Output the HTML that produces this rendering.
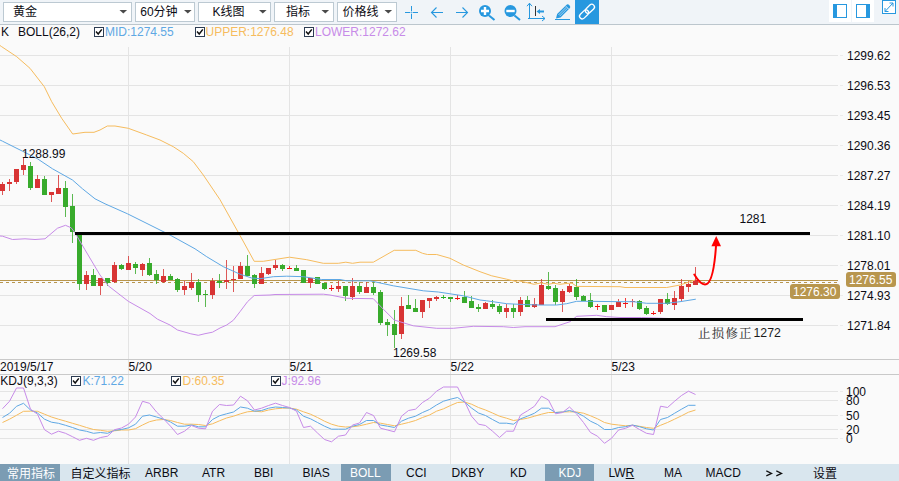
<!DOCTYPE html>
<html><head><meta charset="utf-8"><title>chart</title>
<style>
html,body{margin:0;padding:0;}
body{width:899px;height:481px;overflow:hidden;background:#fafafa;position:relative;font-family:"Liberation Sans",sans-serif;}
#tb{position:absolute;left:0;top:0;width:899px;height:24px;background:#f0f4f8;border-bottom:1px solid #bcc6cd;}
.dd{position:absolute;top:2px;height:18px;background:#fff;border:1px solid #bcc9d2;}
#tabs{position:absolute;left:0;top:464px;width:899px;height:17px;background:#d9e6ee;}
.sel{position:absolute;top:464px;height:17px;background:#7b9cb3;}
.t{position:absolute;white-space:nowrap;line-height:14px;font-size:12px;}
svg{position:absolute;left:0;top:0;}
</style></head><body>
<div id="tb"></div>
<div class="dd" style="left:3px;width:127px"></div>
<div class="dd" style="left:135px;width:58px"></div>
<div class="dd" style="left:198px;width:71px"></div>
<div class="dd" style="left:274px;width:58px"></div>
<div class="dd" style="left:337px;width:58px"></div>
<div id="tabs"></div>
<div class="sel" style="left:0;width:60px"></div>
<div class="sel" style="left:341px;width:50px"></div>
<div class="sel" style="left:545px;width:49px"></div>
<svg width="899" height="481" viewBox="0 0 899 481">
<rect x="0" y="55" width="838" height="1" fill="#e4e4e4"/>
<rect x="840" y="55" width="3" height="1" fill="#ececec"/>
<rect x="0" y="85" width="838" height="1" fill="#e4e4e4"/>
<rect x="840" y="85" width="3" height="1" fill="#ececec"/>
<rect x="0" y="115" width="838" height="1" fill="#e4e4e4"/>
<rect x="840" y="115" width="3" height="1" fill="#ececec"/>
<rect x="0" y="145" width="838" height="1" fill="#e4e4e4"/>
<rect x="840" y="145" width="3" height="1" fill="#ececec"/>
<rect x="0" y="175" width="838" height="1" fill="#e4e4e4"/>
<rect x="840" y="175" width="3" height="1" fill="#ececec"/>
<rect x="0" y="205" width="838" height="1" fill="#e4e4e4"/>
<rect x="840" y="205" width="3" height="1" fill="#ececec"/>
<rect x="0" y="235" width="838" height="1" fill="#e4e4e4"/>
<rect x="840" y="235" width="3" height="1" fill="#ececec"/>
<rect x="0" y="265" width="838" height="1" fill="#e4e4e4"/>
<rect x="840" y="265" width="3" height="1" fill="#ececec"/>
<rect x="0" y="295" width="838" height="1" fill="#e4e4e4"/>
<rect x="840" y="295" width="3" height="1" fill="#ececec"/>
<rect x="0" y="325" width="838" height="1" fill="#e4e4e4"/>
<rect x="840" y="325" width="3" height="1" fill="#ececec"/>
<rect x="128" y="47" width="1" height="417" fill="#e4e4e4"/>
<rect x="289" y="47" width="1" height="417" fill="#e4e4e4"/>
<rect x="450" y="47" width="1" height="417" fill="#e4e4e4"/>
<rect x="611" y="47" width="1" height="417" fill="#e4e4e4"/>
<rect x="0" y="391" width="838" height="1" fill="#e4e4e4"/>
<rect x="840" y="391" width="3" height="1" fill="#ececec"/>
<rect x="0" y="400" width="838" height="1" fill="#e4e4e4"/>
<rect x="840" y="400" width="3" height="1" fill="#ececec"/>
<rect x="0" y="415" width="838" height="1" fill="#e4e4e4"/>
<rect x="840" y="415" width="3" height="1" fill="#ececec"/>
<rect x="0" y="429" width="838" height="1" fill="#e4e4e4"/>
<rect x="840" y="429" width="3" height="1" fill="#ececec"/>
<rect x="0" y="438" width="838" height="1" fill="#e4e4e4"/>
<rect x="840" y="438" width="3" height="1" fill="#ececec"/>
<rect x="0" y="359" width="899" height="1" fill="#c9c9c9"/>
<rect x="0" y="374" width="899" height="1" fill="#c9c9c9"/>
<rect x="0" y="280" width="838" height="1" fill="#b8964e"/>
<line x1="0" y1="282.5" x2="838" y2="282.5" stroke="#b8964e" stroke-width="1" stroke-dasharray="3,3" shape-rendering="crispEdges"/>
<g shape-rendering="crispEdges"><rect x="2" y="182" width="1" height="13" fill="#d83434" opacity="0.82"/><rect x="0" y="184" width="5" height="7" fill="#d83434"/><rect x="9" y="179" width="1" height="12" fill="#d83434" opacity="0.82"/><rect x="7" y="182" width="5" height="2" fill="#d83434"/><rect x="16" y="169" width="1" height="15" fill="#d83434" opacity="0.82"/><rect x="14" y="169" width="5" height="13" fill="#d83434"/><rect x="23" y="158" width="1" height="17" fill="#d83434" opacity="0.82"/><rect x="21" y="165" width="5" height="5" fill="#d83434"/><rect x="30" y="162" width="1" height="28" fill="#38ab2c" opacity="0.82"/><rect x="28" y="166" width="5" height="22" fill="#38ab2c"/><rect x="37" y="175" width="1" height="13" fill="#d83434" opacity="0.82"/><rect x="35" y="179" width="5" height="9" fill="#d83434"/><rect x="44" y="176" width="1" height="19" fill="#38ab2c" opacity="0.82"/><rect x="42" y="179" width="5" height="16" fill="#38ab2c"/><rect x="51" y="192" width="1" height="10" fill="#d83434" opacity="0.82"/><rect x="49" y="192" width="5" height="3" fill="#d83434"/><rect x="58" y="175" width="1" height="19" fill="#d83434" opacity="0.82"/><rect x="56" y="188" width="5" height="6" fill="#d83434"/><rect x="65" y="181" width="1" height="36" fill="#38ab2c" opacity="0.82"/><rect x="63" y="188" width="5" height="19" fill="#38ab2c"/><rect x="72" y="194" width="1" height="49" fill="#38ab2c" opacity="0.82"/><rect x="70" y="206" width="5" height="26" fill="#38ab2c"/><rect x="79" y="232" width="1" height="58" fill="#38ab2c" opacity="0.82"/><rect x="77" y="232" width="5" height="52" fill="#38ab2c"/><rect x="86" y="271" width="1" height="19" fill="#d83434" opacity="0.82"/><rect x="84" y="275" width="5" height="9" fill="#d83434"/><rect x="93" y="269" width="1" height="17" fill="#38ab2c" opacity="0.82"/><rect x="91" y="275" width="5" height="11" fill="#38ab2c"/><rect x="100" y="278" width="1" height="17" fill="#d83434" opacity="0.82"/><rect x="98" y="278" width="5" height="8" fill="#d83434"/><rect x="107" y="278" width="1" height="8" fill="#38ab2c" opacity="0.82"/><rect x="105" y="278" width="5" height="5" fill="#38ab2c"/><rect x="114" y="262" width="1" height="21" fill="#d83434" opacity="0.82"/><rect x="112" y="265" width="5" height="17" fill="#d83434"/><rect x="121" y="264" width="1" height="6" fill="#38ab2c" opacity="0.82"/><rect x="119" y="265" width="5" height="4" fill="#38ab2c"/><rect x="128" y="256" width="1" height="14" fill="#d83434" opacity="0.82"/><rect x="126" y="263" width="5" height="7" fill="#d83434"/><rect x="135" y="262" width="1" height="12" fill="#38ab2c" opacity="0.82"/><rect x="133" y="264" width="5" height="4" fill="#38ab2c"/><rect x="142" y="263" width="1" height="13" fill="#d83434" opacity="0.82"/><rect x="140" y="264" width="5" height="6" fill="#d83434"/><rect x="149" y="258" width="1" height="18" fill="#38ab2c" opacity="0.82"/><rect x="147" y="263" width="5" height="12" fill="#38ab2c"/><rect x="156" y="270" width="1" height="14" fill="#38ab2c" opacity="0.82"/><rect x="154" y="274" width="5" height="6" fill="#38ab2c"/><rect x="163" y="269" width="1" height="14" fill="#d83434" opacity="0.82"/><rect x="161" y="276" width="5" height="6" fill="#d83434"/><rect x="170" y="274" width="1" height="6" fill="#38ab2c" opacity="0.82"/><rect x="168" y="276" width="5" height="4" fill="#38ab2c"/><rect x="177" y="278" width="1" height="14" fill="#38ab2c" opacity="0.82"/><rect x="175" y="279" width="5" height="11" fill="#38ab2c"/><rect x="184" y="281" width="1" height="14" fill="#d83434" opacity="0.82"/><rect x="182" y="286" width="5" height="4" fill="#d83434"/><rect x="191" y="273" width="1" height="17" fill="#d83434" opacity="0.82"/><rect x="189" y="282" width="5" height="6" fill="#d83434"/><rect x="198" y="279" width="1" height="23" fill="#38ab2c" opacity="0.82"/><rect x="196" y="282" width="5" height="13" fill="#38ab2c"/><rect x="205" y="290" width="1" height="17" fill="#38ab2c" opacity="0.82"/><rect x="203" y="294" width="5" height="1" fill="#38ab2c"/><rect x="212" y="278" width="1" height="21" fill="#d83434" opacity="0.82"/><rect x="210" y="281" width="5" height="14" fill="#d83434"/><rect x="219" y="274" width="1" height="14" fill="#38ab2c" opacity="0.82"/><rect x="217" y="281" width="5" height="2" fill="#38ab2c"/><rect x="226" y="260" width="1" height="29" fill="#d83434" opacity="0.82"/><rect x="224" y="280" width="5" height="2" fill="#d83434"/><rect x="233" y="266" width="1" height="26" fill="#d83434" opacity="0.82"/><rect x="231" y="279" width="5" height="1" fill="#d83434"/><rect x="240" y="262" width="1" height="17" fill="#d83434" opacity="0.82"/><rect x="238" y="266" width="5" height="13" fill="#d83434"/><rect x="247" y="255" width="1" height="21" fill="#38ab2c" opacity="0.82"/><rect x="245" y="266" width="5" height="10" fill="#38ab2c"/><rect x="254" y="274" width="1" height="14" fill="#38ab2c" opacity="0.82"/><rect x="252" y="275" width="5" height="9" fill="#38ab2c"/><rect x="261" y="267" width="1" height="17" fill="#d83434" opacity="0.82"/><rect x="259" y="273" width="5" height="11" fill="#d83434"/><rect x="268" y="268" width="1" height="7" fill="#d83434" opacity="0.82"/><rect x="266" y="268" width="5" height="6" fill="#d83434"/><rect x="275" y="260" width="1" height="10" fill="#d83434" opacity="0.82"/><rect x="273" y="265" width="5" height="3" fill="#d83434"/><rect x="282" y="264" width="1" height="7" fill="#38ab2c" opacity="0.82"/><rect x="280" y="265" width="5" height="4" fill="#38ab2c"/><rect x="289" y="266" width="1" height="3" fill="#f01010" opacity="0.82"/><rect x="287" y="268" width="5" height="1" fill="#f01010"/><rect x="296" y="265" width="1" height="6" fill="#38ab2c" opacity="0.82"/><rect x="294" y="268" width="5" height="3" fill="#38ab2c"/><rect x="303" y="270" width="1" height="13" fill="#38ab2c" opacity="0.82"/><rect x="301" y="270" width="5" height="13" fill="#38ab2c"/><rect x="310" y="278" width="1" height="10" fill="#d83434" opacity="0.82"/><rect x="308" y="278" width="5" height="5" fill="#d83434"/><rect x="317" y="277" width="1" height="7" fill="#38ab2c" opacity="0.82"/><rect x="315" y="277" width="5" height="7" fill="#38ab2c"/><rect x="324" y="283" width="1" height="7" fill="#38ab2c" opacity="0.82"/><rect x="322" y="283" width="5" height="6" fill="#38ab2c"/><rect x="331" y="285" width="1" height="6" fill="#f01010" opacity="0.82"/><rect x="329" y="288" width="5" height="1" fill="#f01010"/><rect x="338" y="281" width="1" height="11" fill="#d83434" opacity="0.82"/><rect x="336" y="286" width="5" height="3" fill="#d83434"/><rect x="345" y="286" width="1" height="15" fill="#38ab2c" opacity="0.82"/><rect x="343" y="286" width="5" height="10" fill="#38ab2c"/><rect x="352" y="278" width="1" height="22" fill="#d83434" opacity="0.82"/><rect x="350" y="286" width="5" height="11" fill="#d83434"/><rect x="359" y="282" width="1" height="12" fill="#38ab2c" opacity="0.82"/><rect x="357" y="286" width="5" height="6" fill="#38ab2c"/><rect x="366" y="282" width="1" height="11" fill="#d83434" opacity="0.82"/><rect x="364" y="287" width="5" height="6" fill="#d83434"/><rect x="373" y="282" width="1" height="13" fill="#38ab2c" opacity="0.82"/><rect x="371" y="287" width="5" height="6" fill="#38ab2c"/><rect x="380" y="290" width="1" height="35" fill="#38ab2c" opacity="0.82"/><rect x="378" y="292" width="5" height="31" fill="#38ab2c"/><rect x="387" y="319" width="1" height="17" fill="#38ab2c" opacity="0.82"/><rect x="385" y="322" width="5" height="3" fill="#38ab2c"/><rect x="394" y="310" width="1" height="38" fill="#38ab2c" opacity="0.82"/><rect x="392" y="324" width="5" height="11" fill="#38ab2c"/><rect x="401" y="297" width="1" height="42" fill="#d83434" opacity="0.82"/><rect x="399" y="306" width="5" height="28" fill="#d83434"/><rect x="408" y="295" width="1" height="14" fill="#38ab2c" opacity="0.82"/><rect x="406" y="305" width="5" height="4" fill="#38ab2c"/><rect x="415" y="299" width="1" height="13" fill="#38ab2c" opacity="0.82"/><rect x="413" y="308" width="5" height="4" fill="#38ab2c"/><rect x="422" y="300" width="1" height="18" fill="#d83434" opacity="0.82"/><rect x="420" y="300" width="5" height="12" fill="#d83434"/><rect x="429" y="298" width="1" height="10" fill="#d83434" opacity="0.82"/><rect x="427" y="298" width="5" height="3" fill="#d83434"/><rect x="436" y="296" width="1" height="5" fill="#d83434" opacity="0.82"/><rect x="434" y="297" width="5" height="2" fill="#d83434"/><rect x="443" y="295" width="1" height="4" fill="#20b020" opacity="0.82"/><rect x="441" y="297" width="5" height="1" fill="#20b020"/><rect x="450" y="297" width="1" height="5" fill="#38ab2c" opacity="0.82"/><rect x="448" y="297" width="5" height="2" fill="#38ab2c"/><rect x="457" y="295" width="1" height="5" fill="#f01010" opacity="0.82"/><rect x="455" y="298" width="5" height="1" fill="#f01010"/><rect x="464" y="291" width="1" height="12" fill="#38ab2c" opacity="0.82"/><rect x="462" y="297" width="5" height="6" fill="#38ab2c"/><rect x="471" y="296" width="1" height="12" fill="#38ab2c" opacity="0.82"/><rect x="469" y="301" width="5" height="7" fill="#38ab2c"/><rect x="478" y="304" width="1" height="8" fill="#38ab2c" opacity="0.82"/><rect x="476" y="307" width="5" height="2" fill="#38ab2c"/><rect x="485" y="302" width="1" height="7" fill="#d83434" opacity="0.82"/><rect x="483" y="303" width="5" height="6" fill="#d83434"/><rect x="492" y="300" width="1" height="9" fill="#38ab2c" opacity="0.82"/><rect x="490" y="304" width="5" height="3" fill="#38ab2c"/><rect x="499" y="304" width="1" height="10" fill="#38ab2c" opacity="0.82"/><rect x="497" y="306" width="5" height="6" fill="#38ab2c"/><rect x="506" y="304" width="1" height="14" fill="#d83434" opacity="0.82"/><rect x="504" y="308" width="5" height="4" fill="#d83434"/><rect x="513" y="304" width="1" height="14" fill="#38ab2c" opacity="0.82"/><rect x="511" y="308" width="5" height="4" fill="#38ab2c"/><rect x="520" y="297" width="1" height="19" fill="#d83434" opacity="0.82"/><rect x="518" y="300" width="5" height="12" fill="#d83434"/><rect x="527" y="296" width="1" height="11" fill="#38ab2c" opacity="0.82"/><rect x="525" y="300" width="5" height="7" fill="#38ab2c"/><rect x="534" y="298" width="1" height="10" fill="#d83434" opacity="0.82"/><rect x="532" y="304" width="5" height="3" fill="#d83434"/><rect x="541" y="279" width="1" height="26" fill="#d83434" opacity="0.82"/><rect x="539" y="285" width="5" height="20" fill="#d83434"/><rect x="548" y="272" width="1" height="18" fill="#38ab2c" opacity="0.82"/><rect x="546" y="286" width="5" height="3" fill="#38ab2c"/><rect x="555" y="285" width="1" height="20" fill="#38ab2c" opacity="0.82"/><rect x="553" y="288" width="5" height="14" fill="#38ab2c"/><rect x="562" y="289" width="1" height="23" fill="#d83434" opacity="0.82"/><rect x="560" y="291" width="5" height="11" fill="#d83434"/><rect x="569" y="284" width="1" height="9" fill="#d83434" opacity="0.82"/><rect x="567" y="286" width="5" height="6" fill="#d83434"/><rect x="576" y="279" width="1" height="21" fill="#38ab2c" opacity="0.82"/><rect x="574" y="287" width="5" height="10" fill="#38ab2c"/><rect x="583" y="295" width="1" height="6" fill="#38ab2c" opacity="0.82"/><rect x="581" y="296" width="5" height="5" fill="#38ab2c"/><rect x="590" y="293" width="1" height="15" fill="#38ab2c" opacity="0.82"/><rect x="588" y="300" width="5" height="7" fill="#38ab2c"/><rect x="597" y="304" width="1" height="6" fill="#f01010" opacity="0.82"/><rect x="595" y="306" width="5" height="1" fill="#f01010"/><rect x="604" y="305" width="1" height="7" fill="#38ab2c" opacity="0.82"/><rect x="602" y="305" width="5" height="7" fill="#38ab2c"/><rect x="611" y="305" width="1" height="5" fill="#d83434" opacity="0.82"/><rect x="609" y="305" width="5" height="5" fill="#d83434"/><rect x="618" y="299" width="1" height="8" fill="#d83434" opacity="0.82"/><rect x="616" y="302" width="5" height="5" fill="#d83434"/><rect x="625" y="298" width="1" height="10" fill="#f01010" opacity="0.82"/><rect x="623" y="303" width="5" height="1" fill="#f01010"/><rect x="632" y="299" width="1" height="8" fill="#d83434" opacity="0.82"/><rect x="630" y="301" width="5" height="1" fill="#d83434"/><rect x="639" y="300" width="1" height="10" fill="#38ab2c" opacity="0.82"/><rect x="637" y="301" width="5" height="8" fill="#38ab2c"/><rect x="646" y="306" width="1" height="9" fill="#38ab2c" opacity="0.82"/><rect x="644" y="308" width="5" height="6" fill="#38ab2c"/><rect x="653" y="311" width="1" height="4" fill="#f01010" opacity="0.82"/><rect x="651" y="313" width="5" height="1" fill="#f01010"/><rect x="660" y="299" width="1" height="15" fill="#d83434" opacity="0.82"/><rect x="658" y="299" width="5" height="13" fill="#d83434"/><rect x="667" y="293" width="1" height="12" fill="#38ab2c" opacity="0.82"/><rect x="665" y="299" width="5" height="5" fill="#38ab2c"/><rect x="674" y="291" width="1" height="19" fill="#d83434" opacity="0.82"/><rect x="672" y="298" width="5" height="7" fill="#d83434"/><rect x="681" y="279" width="1" height="22" fill="#d83434" opacity="0.82"/><rect x="679" y="286" width="5" height="13" fill="#d83434"/><rect x="688" y="281" width="1" height="11" fill="#d83434" opacity="0.82"/><rect x="686" y="284" width="5" height="3" fill="#d83434"/><rect x="695" y="267" width="1" height="18" fill="#d83434" opacity="0.82"/><rect x="693" y="280" width="5" height="5" fill="#d83434"/></g>
<polyline fill="none" stroke="#f6bc5e" stroke-width="1.0" stroke-linejoin="round" points="0.0,45.5 1.7,46.7 16.7,56.7 30.0,68.3 44.3,86.7 51.7,101.7 61.7,118.3 72.7,134.0 85.0,132.3 94.0,132.3 100.0,130.0 107.3,126.0 115.0,126.0 128.3,128.3 146.7,135.0 160.0,140.0 173.3,146.7 183.3,153.3 193.3,161.7 203.3,175.0 220.0,199.7 242.5,240.0 254.2,261.3 263.3,261.3 289.5,257.2 306.7,259.7 323.3,263.3 338.3,263.3 345.8,262.2 352.5,263.3 360.0,262.2 373.3,262.2 394.2,250.3 415.8,250.3 422.5,253.3 427.5,254.5 436.7,254.5 450.0,258.3 463.3,265.0 480.0,271.7 491.7,275.8 506.7,279.2 516.7,281.7 517.5,280.5 534.2,284.3 541.0,282.9 548.5,284.3 554.0,283.2 560.0,284.3 567.0,283.4 572.0,283.2 576.7,286.4 620.0,286.7 625.0,287.5 666.7,287.5 680.0,285.0 695.0,280.0"/>
<polyline fill="none" stroke="#c78be8" stroke-width="1.0" stroke-linejoin="round" points="0.0,236.0 2.5,236.2 12.5,239.5 25.0,238.8 35.0,239.5 45.0,238.8 57.5,228.2 65.5,225.3 71.2,227.8 75.0,232.8 85.0,249.8 100.0,275.0 108.3,285.8 128.3,301.3 150.0,313.5 157.5,319.2 170.0,325.0 177.5,330.0 190.8,333.8 198.3,335.3 205.0,333.7 212.5,332.2 220.0,328.0 226.7,325.0 233.3,320.3 240.0,311.7 247.5,301.7 254.2,295.5 270.0,295.0 275.0,294.5 323.3,294.2 330.0,295.0 346.7,298.3 373.3,298.7 383.3,309.2 394.2,320.0 413.3,325.8 436.7,328.3 453.3,328.3 473.3,326.3 503.3,326.7 513.3,327.5 525.0,326.7 555.0,326.7 570.0,321.7 576.7,316.3 596.7,315.3 606.7,316.7 620.0,317.5 641.7,317.5 695.5,319.5"/>
<polyline fill="none" stroke="#5fa8e4" stroke-width="1.0" stroke-linejoin="round" points="0.0,140.0 2.5,141.2 22.5,151.2 37.5,158.8 52.5,168.8 72.5,180.0 82.5,188.8 95.0,198.8 105.0,203.8 127.5,213.8 150.0,225.0 170.0,235.0 195.0,248.8 206.7,256.7 223.3,266.7 240.0,274.2 251.7,278.0 260.0,278.7 273.3,276.7 286.7,276.2 303.3,276.7 321.7,279.5 340.0,279.5 346.7,280.8 370.0,280.8 393.3,285.8 423.3,290.8 438.3,292.0 463.3,295.8 480.0,300.0 486.7,300.8 506.7,303.7 523.3,304.5 540.0,305.0 556.7,305.0 566.7,303.7 576.7,301.3 590.0,301.3 620.0,301.7 633.3,301.7 646.7,303.3 666.7,303.3 680.0,301.7 695.8,299.2"/>
<rect x="75" y="232" width="735" height="3" fill="#000"/>
<rect x="546" y="318" width="257" height="3" fill="#000"/>
<path d="M694.3,274.5 C697,279 701,284.5 705,284.5 C711,284.5 714.5,268 716,246" fill="none" stroke="#f00" stroke-width="2" stroke-linecap="round"/>
<path d="M716.2,236 L711.4,246.3 L721,246.3 Z" fill="#f00"/>
<polyline fill="none" stroke="#f6bc5e" stroke-width="1.0" stroke-linejoin="round" points="2.5,422.5 9.5,419.2 16.5,415.3 23.5,411.3 30.5,411.2 37.5,411.3 44.5,414.2 51.5,417.0 58.5,419.2 65.5,421.2 72.5,423.3 79.5,425.3 86.5,427.5 93.5,429.5 100.5,430.3 107.5,431.3 114.5,430.8 121.5,430.0 128.5,430.0 135.5,428.7 142.5,425.0 149.5,421.7 156.5,420.0 163.5,419.5 170.5,420.5 177.5,422.5 184.5,424.2 191.5,424.2 198.5,424.5 205.5,425.5 212.5,423.8 219.5,420.8 226.5,418.0 233.5,416.2 240.5,413.8 247.5,411.8 254.5,411.2 261.5,411.8 268.5,410.0 275.5,408.8 282.5,408.2 289.5,408.0 296.5,409.2 303.5,411.8 310.5,414.2 317.5,417.5 324.5,421.2 331.5,424.2 338.5,426.2 345.5,427.0 352.5,426.8 359.5,425.8 366.5,424.2 373.5,422.5 380.5,423.2 387.5,424.5 394.5,425.8 401.5,424.2 408.5,422.5 415.5,420.5 422.5,417.5 429.5,415.0 436.5,411.2 443.5,408.8 450.5,405.5 457.5,402.5 464.5,402.0 471.5,404.2 478.5,407.5 485.5,410.0 492.5,413.0 499.5,416.2 506.5,418.2 513.5,420.5 520.5,419.5 527.5,418.2 534.5,416.2 541.5,414.2 548.5,412.5 555.5,412.5 562.5,412.0 569.5,411.8 576.5,412.0 583.5,413.2 590.5,415.8 597.5,418.8 604.5,422.5 611.5,424.2 618.5,425.0 625.5,425.8 632.5,425.3 639.5,426.3 646.5,427.5 653.5,428.3 660.5,425.3 667.5,422.5 674.5,419.2 681.5,415.8 688.5,412.2 695.5,410.0"/>
<polyline fill="none" stroke="#5fa8e4" stroke-width="1.0" stroke-linejoin="round" points="2.5,417.5 9.5,413.3 16.5,406.3 23.5,403.3 30.5,410.0 37.5,413.0 44.5,419.2 51.5,422.2 58.5,423.3 65.5,425.3 72.5,427.5 79.5,430.0 86.5,431.3 93.5,433.3 100.5,432.5 107.5,433.3 114.5,430.3 121.5,429.5 128.5,427.8 135.5,424.2 142.5,416.2 149.5,415.0 156.5,417.0 163.5,419.2 170.5,422.0 177.5,426.2 184.5,426.2 191.5,425.0 198.5,426.8 205.5,426.8 212.5,419.5 219.5,415.8 226.5,413.8 233.5,412.0 240.5,407.0 247.5,408.2 254.5,411.2 261.5,410.5 268.5,408.2 275.5,407.0 282.5,407.5 289.5,408.0 296.5,410.0 303.5,416.2 310.5,418.8 317.5,422.5 324.5,426.2 331.5,429.2 338.5,429.2 345.5,429.2 352.5,426.2 359.5,424.5 366.5,420.5 373.5,420.5 380.5,425.0 387.5,426.2 394.5,427.5 401.5,421.2 408.5,418.2 415.5,416.2 422.5,412.5 429.5,409.5 436.5,405.0 443.5,401.2 450.5,399.2 457.5,397.5 464.5,402.0 471.5,408.0 478.5,413.0 485.5,415.5 492.5,419.5 499.5,423.2 506.5,423.2 513.5,424.2 520.5,418.8 527.5,416.2 534.5,413.2 541.5,408.2 548.5,408.2 555.5,412.5 562.5,412.0 569.5,410.5 576.5,412.5 583.5,416.2 590.5,421.2 597.5,424.5 604.5,429.5 611.5,429.5 618.5,427.5 625.5,426.7 632.5,425.0 639.5,426.7 646.5,428.8 653.5,430.0 660.5,419.5 667.5,417.5 674.5,413.3 681.5,409.2 688.5,405.3 695.5,405.3"/>
<polyline fill="none" stroke="#c78be8" stroke-width="1.0" stroke-linejoin="round" points="2.5,408.7 9.5,401.3 16.5,388.0 23.5,388.0 30.5,409.2 37.5,414.2 44.5,429.7 51.5,434.2 58.5,431.2 65.5,433.3 72.5,436.7 79.5,440.3 86.5,438.3 93.5,440.3 100.5,437.5 107.5,436.2 114.5,429.7 121.5,428.0 128.5,424.2 135.5,417.0 142.5,401.3 149.5,403.3 156.5,412.0 163.5,418.8 170.5,426.2 177.5,434.5 184.5,431.2 191.5,425.5 198.5,428.2 205.5,428.8 212.5,411.2 219.5,404.5 226.5,405.5 233.5,405.0 240.5,396.2 247.5,400.8 254.5,410.0 261.5,408.2 268.5,405.5 275.5,403.2 282.5,405.5 289.5,407.5 296.5,411.2 303.5,427.5 310.5,426.2 317.5,433.0 324.5,439.5 331.5,441.8 338.5,436.2 345.5,435.0 352.5,425.0 359.5,423.0 366.5,412.5 373.5,415.5 380.5,428.2 387.5,430.0 394.5,431.8 401.5,416.2 408.5,410.5 415.5,409.2 422.5,402.5 429.5,398.2 436.5,391.2 443.5,387.0 450.5,387.0 457.5,387.0 464.5,401.2 471.5,416.2 478.5,424.2 485.5,425.5 492.5,431.2 499.5,437.5 506.5,431.2 513.5,431.2 520.5,415.0 527.5,410.8 534.5,406.2 541.5,396.2 548.5,400.0 555.5,413.8 562.5,412.5 569.5,407.0 576.5,413.8 583.5,422.5 590.5,432.5 597.5,436.2 604.5,443.3 611.5,438.3 618.5,430.0 625.5,428.3 632.5,425.3 639.5,429.5 646.5,433.3 653.5,434.5 660.5,406.2 667.5,407.5 674.5,401.3 681.5,395.5 688.5,391.2 695.5,394.5"/>
<rect x="846" y="272" width="50" height="15" rx="3" fill="#b8964e"/>
<rect x="790" y="284" width="50" height="15" rx="3" fill="#b8964e"/>
<text x="13" y="16.3" font-size="12" fill="#0c0c14" font-family="&quot;Liberation Sans&quot;, &quot;Noto Sans CJK SC&quot;, sans-serif">黄金</text>
<text x="153.5" y="16.3" font-size="12" fill="#0c0c14" font-family="&quot;Liberation Sans&quot;, &quot;Noto Sans CJK SC&quot;, sans-serif">分钟</text>
<text x="220.5" y="16.3" font-size="12" fill="#0c0c14" font-family="&quot;Liberation Sans&quot;, &quot;Noto Sans CJK SC&quot;, sans-serif">线图</text>
<text x="286" y="16.3" font-size="12" fill="#0c0c14" font-family="&quot;Liberation Sans&quot;, &quot;Noto Sans CJK SC&quot;, sans-serif">指标</text>
<text x="342.5" y="16.3" font-size="12" fill="#0c0c14" font-family="&quot;Liberation Sans&quot;, &quot;Noto Sans CJK SC&quot;, sans-serif">价格线</text>
<text x="7" y="477.5" font-size="12" fill="#fff" font-family="&quot;Liberation Sans&quot;, &quot;Noto Sans CJK SC&quot;, sans-serif">常用指标</text>
<text x="70.5" y="477.5" font-size="12" fill="#0c0c14" font-family="&quot;Liberation Sans&quot;, &quot;Noto Sans CJK SC&quot;, sans-serif">自定义指标</text>
<text x="813" y="477.5" font-size="12" fill="#0c0c14" font-family="&quot;Liberation Sans&quot;, &quot;Noto Sans CJK SC&quot;, sans-serif">设置</text>
<text x="698" y="338" font-size="12.5" letter-spacing="1.2" fill="#2a2a2a" font-family="&quot;Liberation Serif&quot;, &quot;Noto Serif CJK SC&quot;, serif">止损修正</text>
<g shape-rendering="crispEdges" fill="#2798df"><rect x="405" y="12" width="5" height="1"/><rect x="413" y="12" width="5" height="1"/><rect x="411" y="6" width="1" height="5"/><rect x="411" y="14" width="1" height="5"/><rect x="411" y="12" width="1" height="1" opacity="0.7"/><rect x="410" y="12" width="1" height="1" opacity="0.35"/><rect x="412" y="12" width="1" height="1" opacity="0.35"/><rect x="411" y="11" width="1" height="1" opacity="0.35"/><rect x="411" y="13" width="1" height="1" opacity="0.35"/></g><path d="M443,12.5 H431.5 M436.5,7.5 L431.5,12.5 L436.5,17.5" fill="none" stroke="#2798df" stroke-width="1.1"/><path d="M456,12.5 H467.5 M462.5,7.5 L467.5,12.5 L462.5,17.5" fill="none" stroke="#2798df" stroke-width="1.1"/><circle cx="485" cy="11" r="6" fill="#2798df"/><path d="M489,15.5 L494.5,20" stroke="#2798df" stroke-width="2" /><path d="M481,11 H489 M485,7 V15" stroke="#fff" stroke-width="2.4"/><circle cx="510.5" cy="11" r="6" fill="#2798df"/><path d="M514.5,15.5 L520,20" stroke="#2798df" stroke-width="2" /><path d="M506.3,11 H514.7" stroke="#fff" stroke-width="2.4"/><path d="M529.5,18.5 V3.2 M527,6.2 L529.5,3.2 L532,6.2 M528,18.5 H545 M542,16 L545,18.5 L542,21" fill="none" stroke="#2798df" stroke-width="1"/><rect x="535" y="6" width="1" height="10" fill="#333"/><path d="M536.5,11.5 L540,9 V10.5 H544 V12.5 H540 V14 Z" fill="#2798df"/><path d="M555,19.5 H570" stroke="#2798df" stroke-width="1"/><g transform="translate(556,18.6) rotate(-45)"><path d="M0,0 L4,-2.4 H17 Q19,-2.4 19,0 Q19,2.4 17,2.4 H4 Z" fill="#2798df"/><path d="M4.3,-0.8 H15.5 M4.3,0.8 H15.5" stroke="#f0f4f8" stroke-width="0.6"/><path d="M15.8,-2.4 V2.4" stroke="#f0f4f8" stroke-width="0.6"/></g><rect x="575" y="0" width="24" height="24" fill="#2798df"/><g transform="translate(587,11.6) rotate(-44)" fill="none" stroke="#fff" stroke-width="1.3"><rect x="-9.3" y="-2.7" width="10.6" height="5.4" rx="2.7"/><rect x="-1.3" y="-2.7" width="10.6" height="5.4" rx="2.7"/></g><rect x="829" y="0" width="22" height="22" fill="#fff"/><rect x="852" y="0" width="22" height="22" fill="#fff"/><rect x="833.5" y="4.5" width="13" height="13" fill="#fff" stroke="#2798df"/><rect x="833" y="4" width="4" height="14" fill="#2798df"/><rect x="856.5" y="4.5" width="13" height="13" fill="#fff" stroke="#2798df"/><rect x="866" y="4" width="4" height="14" fill="#2798df"/><rect x="882.5" y="0.5" width="13" height="13" fill="#fff" stroke="#2798df"/><path d="M885,11.5 L893,3 M885,8 V11.5 H888.5 M889.5,3 H893 V6.5" fill="none" stroke="#2798df" stroke-width="1"/>
<path d="M119.5,10 h7.6 l-3.8,3.6 z" fill="#4a4a4a"/>
<path d="M184.0,10 h7.6 l-3.8,3.6 z" fill="#4a4a4a"/>
<path d="M259.0,10 h7.6 l-3.8,3.6 z" fill="#4a4a4a"/>
<path d="M321.5,10 h7.6 l-3.8,3.6 z" fill="#4a4a4a"/>
<path d="M384.5,10 h7.6 l-3.8,3.6 z" fill="#4a4a4a"/>
<rect x="94.5" y="27.5" width="9" height="9" fill="#fff" stroke="#2c3c52" stroke-width="1"/><path d="M96.0,31.6 l2.2,2.4 l3.6,-4.6" fill="none" stroke="#111" stroke-width="1.5"/>
<rect x="195.5" y="27.5" width="9" height="9" fill="#fff" stroke="#2c3c52" stroke-width="1"/><path d="M197.0,31.6 l2.2,2.4 l3.6,-4.6" fill="none" stroke="#111" stroke-width="1.5"/>
<rect x="304.5" y="27.5" width="9" height="9" fill="#fff" stroke="#2c3c52" stroke-width="1"/><path d="M306.0,31.6 l2.2,2.4 l3.6,-4.6" fill="none" stroke="#111" stroke-width="1.5"/>
<rect x="71.5" y="376.5" width="9" height="9" fill="#fff" stroke="#2c3c52" stroke-width="1"/><path d="M73.0,380.6 l2.2,2.4 l3.6,-4.6" fill="none" stroke="#111" stroke-width="1.5"/>
<rect x="171.5" y="376.5" width="9" height="9" fill="#fff" stroke="#2c3c52" stroke-width="1"/><path d="M173.0,380.6 l2.2,2.4 l3.6,-4.6" fill="none" stroke="#111" stroke-width="1.5"/>
<rect x="271.5" y="376.5" width="9" height="9" fill="#fff" stroke="#2c3c52" stroke-width="1"/><path d="M273.0,380.6 l2.2,2.4 l3.6,-4.6" fill="none" stroke="#111" stroke-width="1.5"/>
<path d="M766.3,470.9 L771.6,473.4 L766.3,475.9 M776.3,470.9 L781.6,473.4 L776.3,475.9" fill="none" stroke="#111" stroke-width="1.2"/>
</svg>
<div class="t" style="left:140.3px;top:4.5px;color:#0c0c14;font-size:12px;">60</div>
<div class="t" style="left:212.5px;top:4.5px;color:#0c0c14;font-size:12px;">K</div>
<div class="t" style="left:1px;top:25px;color:#0c0c14;font-size:12px;">K</div>
<div class="t" style="left:18px;top:25px;color:#0c0c14;font-size:12px;">BOLL(26,2)</div>
<div class="t" style="left:105px;top:25px;color:#5fa8e4;font-size:12px;">MID:1274.55</div>
<div class="t" style="left:205.5px;top:25px;color:#f6bc5e;font-size:12px;">UPPER:1276.48</div>
<div class="t" style="left:315px;top:25px;color:#c78be8;font-size:12px;">LOWER:1272.62</div>
<div class="t" style="left:847px;top:49px;color:#0c0c14;font-size:12px;">1299.62</div>
<div class="t" style="left:847px;top:79px;color:#0c0c14;font-size:12px;">1296.53</div>
<div class="t" style="left:847px;top:109px;color:#0c0c14;font-size:12px;">1293.45</div>
<div class="t" style="left:847px;top:139px;color:#0c0c14;font-size:12px;">1290.36</div>
<div class="t" style="left:847px;top:169px;color:#0c0c14;font-size:12px;">1287.27</div>
<div class="t" style="left:847px;top:199px;color:#0c0c14;font-size:12px;">1284.19</div>
<div class="t" style="left:847px;top:229px;color:#0c0c14;font-size:12px;">1281.10</div>
<div class="t" style="left:847px;top:259px;color:#0c0c14;font-size:12px;">1278.01</div>
<div class="t" style="left:847px;top:289px;color:#0c0c14;font-size:12px;">1274.93</div>
<div class="t" style="left:847px;top:319px;color:#0c0c14;font-size:12px;">1271.84</div>
<div class="t" style="left:22px;top:147px;color:#0c0c14;font-size:12px;">1288.99</div>
<div class="t" style="left:393px;top:346px;color:#0c0c14;font-size:12px;">1269.58</div>
<div class="t" style="left:739.5px;top:212px;color:#0c0c14;font-size:12px;">1281</div>
<div class="t" style="left:753.5px;top:326px;color:#1a1a1a;font-size:12.3px;">1272</div>
<div class="t" style="left:849px;top:273px;color:#fff;font-size:12px;">1276.55</div>
<div class="t" style="left:793px;top:285px;color:#fff;font-size:12px;">1276.30</div>
<div class="t" style="left:0px;top:360px;color:#0c0c14;font-size:12px;">2019/5/17</div>
<div class="t" style="left:128.5px;top:360px;color:#0c0c14;font-size:12px;">5/20</div>
<div class="t" style="left:289.5px;top:360px;color:#0c0c14;font-size:12px;">5/21</div>
<div class="t" style="left:450.5px;top:360px;color:#0c0c14;font-size:12px;">5/22</div>
<div class="t" style="left:611.5px;top:360px;color:#0c0c14;font-size:12px;">5/23</div>
<div class="t" style="left:0.3px;top:373.7px;color:#0c0c14;font-size:12px;">KDJ(9,3,3)</div>
<div class="t" style="left:82.5px;top:373.7px;color:#5fa8e4;font-size:12px;">K:71.22</div>
<div class="t" style="left:182.5px;top:373.7px;color:#f6bc5e;font-size:12px;">D:60.35</div>
<div class="t" style="left:281.6px;top:373.7px;color:#c78be8;font-size:12px;">J:92.96</div>
<div class="t" style="left:846px;top:384.5px;color:#0c0c14;font-size:12px;">100</div>
<div class="t" style="left:846px;top:393.5px;color:#0c0c14;font-size:12px;">80</div>
<div class="t" style="left:846px;top:408.5px;color:#0c0c14;font-size:12px;">50</div>
<div class="t" style="left:846px;top:422.5px;color:#0c0c14;font-size:12px;">20</div>
<div class="t" style="left:846px;top:431.5px;color:#0c0c14;font-size:12px;">0</div>
<div class="t" style="left:145px;top:465.5px;color:#0c0c14;font-size:12px;">ARBR</div>
<div class="t" style="left:202px;top:465.5px;color:#0c0c14;font-size:12px;">ATR</div>
<div class="t" style="left:254px;top:465.5px;color:#0c0c14;font-size:12px;">BBI</div>
<div class="t" style="left:302.5px;top:465.5px;color:#0c0c14;font-size:12px;">BIAS</div>
<div class="t" style="left:406px;top:465.5px;color:#0c0c14;font-size:12px;">CCI</div>
<div class="t" style="left:451.5px;top:465.5px;color:#0c0c14;font-size:12px;">DKBY</div>
<div class="t" style="left:510px;top:465.5px;color:#0c0c14;font-size:12px;">KD</div>
<div class="t" style="left:664px;top:465.5px;color:#0c0c14;font-size:12px;">MA</div>
<div class="t" style="left:705.5px;top:465.5px;color:#0c0c14;font-size:12px;">MACD</div>
<div class="t" style="left:350px;top:465.5px;color:#fff;font-size:12px;">BOLL</div>
<div class="t" style="left:558.5px;top:465.5px;color:#fff;font-size:12px;">KDJ</div>
<div class="t" style="left:608.5px;top:465.5px;color:#0c0c14;font-size:12px;">LW<u>R</u></div>
</body></html>
